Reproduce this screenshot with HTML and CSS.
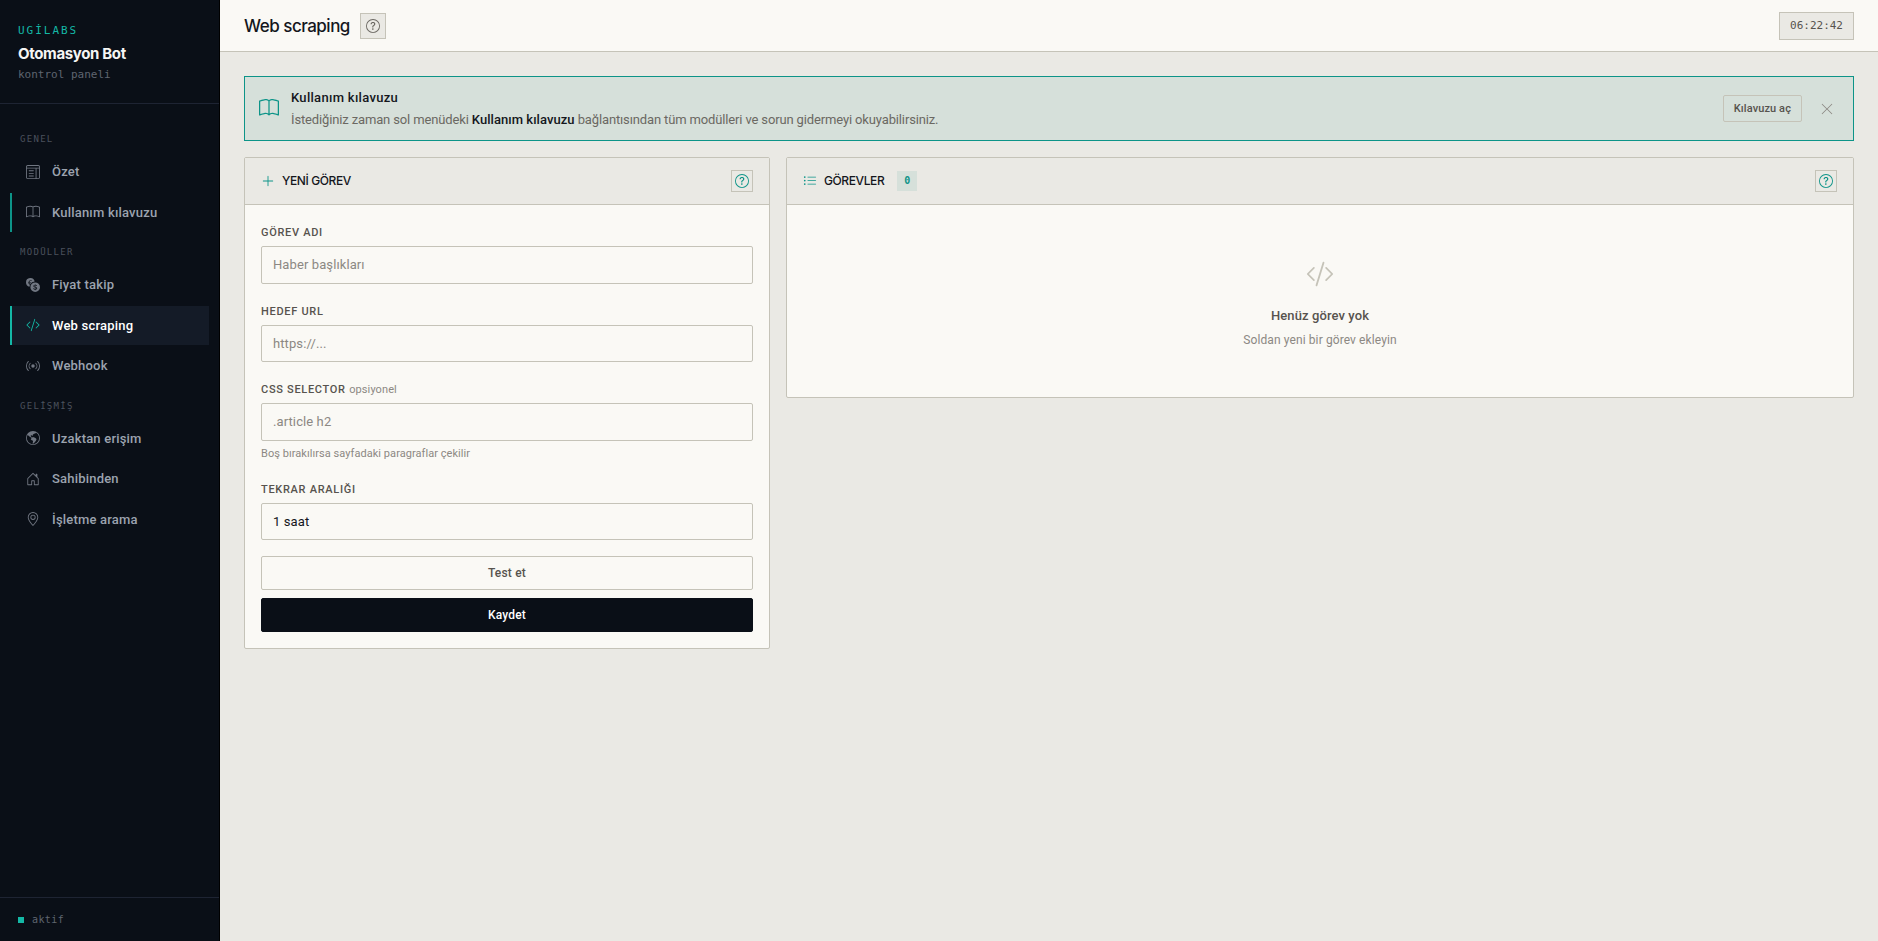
FILE: index.html
```html
<!DOCTYPE html>
<html lang="tr">
<head>
    <meta charset="UTF-8">
    <meta name="viewport" content="width=device-width, initial-scale=1.0">
    <title>Web scraping - Otomasyon Bot</title>
    <link rel="stylesheet" href="styles.css">
</head>
<body>
    <svg class="sprite" xmlns="http://www.w3.org/2000/svg">
        <symbol id="i-window" viewBox="0 0 16 16">
            <path d="M3 6.500a.5.5 0 0 1 .5-.5h5a.5.5 0 0 1 0 1h-5a.5.5 0 0 1-.5-.5m0 3a.5.5 0 0 1 .5-.5h5a.5.5 0 0 1 0 1h-5a.5.5 0 0 1-.5-.5m.5 2.500a.5.5 0 0 0 0 1h5a.5.5 0 0 0 0-1z"/>
            <path d="M2 0a2 2 0 0 0-2 2v12a2 2 0 0 0 2 2h12a2 2 0 0 0 2-2V2a2 2 0 0 0-2-2zm12 1a1 1 0 0 1 1 1v1H1V2a1 1 0 0 1 1-1zm1 3v10a1 1 0 0 1-1 1h-2V4zm-4 0v11H2a1 1 0 0 1-1-1V4z"/>
        </symbol>
        <symbol id="i-book" viewBox="0 0 16 16">
            <path d="M1 2.828c.885-.37 2.154-.769 3.388-.893 1.33-.134 2.458.063 3.112.752v9.746c-.935-.53-2.12-.603-3.213-.493-1.18.12-2.37.461-3.287.811zm7.5-.141c.654-.689 1.782-.886 3.112-.752 1.234.124 2.503.523 3.388.893v9.923c-.918-.35-2.107-.692-3.287-.81-1.094-.111-2.278-.039-3.213.492zM8 1.783C7.015.936 5.587.81 4.287.94c-1.514.153-3.042.672-3.994 1.105A.5.5 0 0 0 0 2.500v11a.5.5 0 0 0 .707.455c.882-.4 2.303-.881 3.68-1.020 1.409-.142 2.590.087 3.223.877a.5.5 0 0 0 .78 0c.633-.79 1.814-1.019 3.222-.877 1.378.139 2.800.62 3.681 1.020A.5.5 0 0 0 16 13.500v-11a.5.5 0 0 0-.293-.455c-.952-.433-2.480-.952-3.994-1.105C10.413.809 8.985.936 8 1.783"/>
        </symbol>
        <symbol id="i-exchange" viewBox="0 0 16 16">
            <path d="M0 5a5 5 0 0 0 4.027 4.905 6.5 6.5 0 0 1 .544-2.073C3.695 7.536 3.132 6.864 3 5.91h-.5v-.426h.466V5.050q-.001-.07.004-.135H2.500v-.427h.511C3.236 3.240 4.213 2.500 5.681 2.500c.316 0 .59.031.819.085v.733a3.500 3.500 0 0 0-.815-.082c-.919 0-1.538.466-1.734 1.252h1.917v.427h-1.980q-.004.07-.003.147v.422h1.983v.427H3.930c.118.602.468 1.030 1.005 1.229a6.500 6.500 0 0 1 4.970-3.113A5.002 5.002 0 0 0 0 5m16 5.500a5.500 5.500 0 1 1-11 0 5.500 5.500 0 0 1 11 0m-7.750 1.322c.069.835.746 1.485 1.964 1.562V14h.54v-.62c1.259-.086 1.996-.74 1.996-1.690 0-.865-.563-1.310-1.570-1.540l-.426-.1V8.374c.54.06.884.347.966.745h.948c-.07-.804-.779-1.433-1.914-1.502V7h-.54v.629c-1.076.103-1.808.732-1.808 1.622 0 .787.544 1.288 1.450 1.493l.358.085v1.780c-.554-.08-.92-.376-1.003-.787zm1.960-1.895c-.532-.12-.82-.364-.82-.732 0-.41.311-.719.824-.809v1.540h-.005zm.622 1.044c.645.145.943.38.943.796 0 .474-.37.8-1.020.86v-1.674z"/>
        </symbol>
        <symbol id="i-code" viewBox="0 0 16 16">
            <path d="M10.478 1.647a.5.5 0 1 0-.956-.294l-4 13a.5.5 0 0 0 .956.294zM4.854 4.146a.5.5 0 0 1 0 .708L1.707 8l3.147 3.146a.5.5 0 0 1-.708.708l-3.500-3.500a.5.5 0 0 1 0-.708l3.500-3.500a.5.5 0 0 1 .708 0m6.292 0a.5.5 0 0 0 0 .708L14.293 8l-3.147 3.146a.5.5 0 0 0 .708.708l3.500-3.500a.5.5 0 0 0 0-.708l-3.500-3.500a.5.5 0 0 0-.708 0"/>
        </symbol>
        <symbol id="i-broadcast" viewBox="0 0 16 16">
            <path d="M3.050 3.050a7 7 0 0 0 0 9.900.5.5 0 0 1-.707.707 8 8 0 0 1 0-11.314.5.5 0 0 1 .707.707m2.122 2.122a4 4 0 0 0 0 5.656.5.5 0 1 1-.708.708 5 5 0 0 1 0-7.072.5.5 0 0 1 .708.708m5.656-.708a.5.5 0 0 1 .708 0 5 5 0 0 1 0 7.072.5.5 0 1 1-.708-.708 4 4 0 0 0 0-5.656.5.5 0 0 1 0-.708m2.122-2.120a.5.5 0 0 1 .707 0 8 8 0 0 1 0 11.313.5.5 0 0 1-.707-.707 7 7 0 0 0 0-9.900.5.5 0 0 1 0-.707zM10 8a2 2 0 1 1-4 0 2 2 0 0 1 4 0"/>
        </symbol>
        <symbol id="i-globe" viewBox="0 0 16 16">
            <path d="M8 0a8 8 0 1 0 0 16A8 8 0 0 0 8 0M2.040 4.326c.325 1.329 2.532 2.540 3.717 3.190.48.263.793.434.743.484q-.121.12-.242.234c-.416.396-.787.749-.758 1.266.035.634.618.824 1.214 1.017.577.188 1.168.38 1.286.983.082.417-.075.988-.22 1.520-.215.782-.406 1.480.22 1.480 1.500-.5 3.798-3.186 4-5 .138-1.243-2-2-3.500-2.500-.478-.16-.755.081-.99.284-.172.15-.322.279-.51.216-.445-.148-2.500-2-1.500-2.500.78-.39.952-.171 1.227.182.078.099.163.208.273.318.609.304.662-.132.723-.633.039-.322.081-.671.277-.867.434-.434 1.265-.791 2.028-1.120.712-.306 1.365-.587 1.579-.88A7 7 0 1 1 2.040 4.327Z"/>
        </symbol>
        <symbol id="i-house" viewBox="0 0 16 16">
            <path d="M8.354 1.146a.5.5 0 0 0-.708 0l-6 6A.5.5 0 0 0 1.500 7.500v7a.5.5 0 0 0 .5.5h4.500a.5.5 0 0 0 .5-.5v-4h2v4a.5.5 0 0 0 .5.5H14a.5.5 0 0 0 .5-.5v-7a.5.5 0 0 0-.146-.354L13 5.793V2.500a.5.5 0 0 0-.5-.5h-1a.5.5 0 0 0-.5.5v1.293zM2.500 14V7.707l5.500-5.500 5.500 5.500V14H10v-4a.5.5 0 0 0-.5-.5h-3a.5.5 0 0 0-.5.5v4z"/>
        </symbol>
        <symbol id="i-geo" viewBox="0 0 16 16">
            <path d="M12.166 8.940c-.524 1.062-1.234 2.120-1.960 3.070A32 32 0 0 1 8 14.580a32 32 0 0 1-2.206-2.570c-.726-.95-1.436-2.008-1.960-3.070C3.304 7.867 3 6.862 3 6a5 5 0 0 1 10 0c0 .862-.305 1.867-.834 2.940M8 16s6-5.686 6-10A6 6 0 0 0 2 6c0 4.314 6 10 6 10"/>
            <path d="M8 8a2 2 0 1 1 0-4 2 2 0 0 1 0 4m0 1a3 3 0 1 0 0-6 3 3 0 0 0 0 6"/>
        </symbol>
        <symbol id="i-help" viewBox="0 0 16 16">
            <path d="M8 15A7 7 0 1 1 8 1a7 7 0 0 1 0 14m0 1A8 8 0 1 0 8 0a8 8 0 0 0 0 16"/>
            <path d="M5.255 5.786a.237.237 0 0 0 .241.247h.825c.138 0 .248-.113.266-.25.09-.656.54-1.134 1.342-1.134.686 0 1.314.343 1.314 1.168 0 .635-.374.927-.965 1.371-.673.489-1.206 1.060-1.168 1.987l.003.217a.25.25 0 0 0 .25.246h.811a.25.25 0 0 0 .25-.25v-.105c0-.718.273-.927 1.010-1.486.609-.463 1.244-.977 1.244-2.056 0-1.511-1.276-2.241-2.673-2.241-1.267 0-2.655.59-2.750 2.286m1.557 5.763c0 .533.425.927 1.010.927.609 0 1.028-.394 1.028-.927 0-.552-.42-.94-1.029-.94-.584 0-1.009.388-1.009.94"/>
        </symbol>
        <symbol id="i-plus" viewBox="0 0 16 16">
            <path d="M8 2a.5.5 0 0 1 .5.5v5h5a.5.5 0 0 1 0 1h-5v5a.5.5 0 0 1-1 0v-5h-5a.5.5 0 0 1 0-1h5v-5A.5.5 0 0 1 8 2"/>
        </symbol>
        <symbol id="i-list" viewBox="0 0 16 16">
            <path d="M5 11.500a.5.5 0 0 1 .5-.5h9a.5.5 0 0 1 0 1h-9a.5.5 0 0 1-.5-.5m0-4a.5.5 0 0 1 .5-.5h9a.5.5 0 0 1 0 1h-9a.5.5 0 0 1-.5-.5m0-4a.5.5 0 0 1 .5-.5h9a.5.5 0 0 1 0 1h-9a.5.5 0 0 1-.5-.5m-3 1a1 1 0 1 0 0-2 1 1 0 0 0 0 2m0 4a1 1 0 1 0 0-2 1 1 0 0 0 0 2m0 4a1 1 0 1 0 0-2 1 1 0 0 0 0 2"/>
        </symbol>
        <symbol id="i-close" viewBox="0 0 16 16">
            <path d="M2.146 2.854a.5.5 0 1 1 .708-.708L8 7.293l5.146-5.147a.5.5 0 0 1 .708.708L8.707 8l5.147 5.146a.5.5 0 0 1-.708.708L8 8.707l-5.146 5.147a.5.5 0 0 1-.708-.708L7.293 8z"/>
        </symbol>
    </svg>

    <div class="app">
        <aside class="sidebar">
            <div class="brand">
                <div class="brand-tag">UGİLABS</div>
                <div class="brand-name">Otomasyon Bot</div>
                <div class="brand-sub">kontrol paneli</div>
            </div>
            <nav class="nav">
                <div class="nav-label">GENEL</div>
                <a class="nav-item" href="#"><svg class="icon"><use href="#i-window"/></svg>Özet</a>
                <a class="nav-item guide" href="#"><svg class="icon"><use href="#i-book"/></svg>Kullanım kılavuzu</a>
                <div class="nav-label">MODÜLLER</div>
                <a class="nav-item" href="#"><svg class="icon"><use href="#i-exchange"/></svg>Fiyat takip</a>
                <a class="nav-item active" href="#"><svg class="icon"><use href="#i-code"/></svg>Web scraping</a>
                <a class="nav-item" href="#"><svg class="icon"><use href="#i-broadcast"/></svg>Webhook</a>
                <div class="nav-label">GELİŞMİŞ</div>
                <a class="nav-item" href="#"><svg class="icon"><use href="#i-globe"/></svg>Uzaktan erişim</a>
                <a class="nav-item" href="#"><svg class="icon"><use href="#i-house"/></svg>Sahibinden</a>
                <a class="nav-item" href="#"><svg class="icon"><use href="#i-geo"/></svg>İşletme arama</a>
            </nav>
            <div class="sidebar-foot"><span class="dot"></span>aktif</div>
        </aside>

        <div class="main">
            <header class="topbar">
                <h1>Web scraping</h1>
                <button class="help help-lg"><svg class="icon"><use href="#i-help"/></svg></button>
                <div class="clock">06:22:42</div>
            </header>

            <main class="content">
                <div class="banner">
                    <svg class="icon banner-icon"><use href="#i-book"/></svg>
                    <div class="banner-text">
                        <div class="banner-title">Kullanım kılavuzu</div>
                        <p>İstediğiniz zaman sol menüdeki <strong>Kullanım kılavuzu</strong> bağlantısından tüm modülleri ve sorun gidermeyi okuyabilirsiniz.</p>
                    </div>
                    <button class="btn-guide">Kılavuzu aç</button>
                    <button class="btn-close"><svg class="icon"><use href="#i-close"/></svg></button>
                </div>

                <div class="columns">
                    <section class="card">
                        <div class="card-head">
                            <svg class="icon"><use href="#i-plus"/></svg>
                            <h2>YENİ GÖREV</h2>
                            <button class="help"><svg class="icon"><use href="#i-help"/></svg></button>
                        </div>
                        <form class="card-body">
                            <div class="field">
                                <label for="name">GÖREV ADI</label>
                                <input id="name" type="text" placeholder="Haber başlıkları">
                            </div>
                            <div class="field">
                                <label for="url">HEDEF URL</label>
                                <input id="url" type="text" placeholder="https://...">
                            </div>
                            <div class="field">
                                <label for="selector">CSS SELECTOR <span class="optional">opsiyonel</span></label>
                                <input id="selector" type="text" placeholder=".article h2">
                                <div class="hint">Boş bırakılırsa sayfadaki paragraflar çekilir</div>
                            </div>
                            <div class="field">
                                <label for="interval">TEKRAR ARALIĞI</label>
                                <select id="interval">
                                    <option>1 saat</option>
                                </select>
                            </div>
                            <div class="actions">
                                <button type="button" class="btn">Test et</button>
                                <button type="button" class="btn btn-dark">Kaydet</button>
                            </div>
                        </form>
                    </section>

                    <section class="card">
                        <div class="card-head">
                            <svg class="icon"><use href="#i-list"/></svg>
                            <h2>GÖREVLER</h2>
                            <span class="count">0</span>
                            <button class="help"><svg class="icon"><use href="#i-help"/></svg></button>
                        </div>
                        <div class="empty">
                            <svg class="icon"><use href="#i-code"/></svg>
                            <div class="empty-title">Henüz görev yok</div>
                            <div class="empty-sub">Soldan yeni bir görev ekleyin</div>
                        </div>
                    </section>
                </div>
            </main>
        </div>
    </div>
</body>
</html>
```
FILE: styles.css
```css
:root {
    --ink: #0a0f17;
    --paper: #faf9f5;
    --bg: #eae9e4;
    --line: #c5c3b8;
    --teal: #0d9488;
    --teal-bright: #14b8a6;
    --tint: #d6e0da;
    --text: #14161c;
    --text-mid: #57534e;
    --text-soft: #8c8883;
    --sans: Roboto, "Noto Sans", sans-serif;
    --head: Inter, Roboto, sans-serif;
    --mono: "DejaVu Sans Mono", "Liberation Mono", monospace;
}
* {
    box-sizing: border-box;
}
body {
    margin: 0;
    background: var(--bg);
    color: var(--text);
    font-family: var(--sans);
    font-size: 13px;
    line-height: 1.5;
}
button, input, select {
    font-family: inherit;
}
.sprite {
    display: none;
}
.icon {
    display: block;
    width: 14px;
    height: 14px;
    flex-shrink: 0;
    fill: currentColor;
}
.app {
    display: flex;
    height: 100vh;
}

/* sidebar */
.sidebar {
    width: 220px;
    flex-shrink: 0;
    display: flex;
    flex-direction: column;
    background: var(--ink);
    border-right: 1px solid #000;
}
.brand {
    height: 104px;
    padding: 22px 18px 0;
    border-bottom: 1px solid #1e2433;
}
.brand-tag {
    font: 11px/17px var(--mono);
    letter-spacing: 1.98px;
    color: var(--teal-bright);
}
.brand-name {
    margin-top: 3px;
    font: 700 15px/24px var(--head);
    letter-spacing: -0.35px;
    color: #f5f5f4;
}
.brand-sub {
    font: 11px/17px var(--mono);
    color: #5f6570;
}
.nav {
    flex: 1;
    padding: 16px 10px;
}
.nav-label {
    height: 32px;
    padding: 12px 10px 0;
    font: 9px/14px var(--mono);
    letter-spacing: 1.3px;
    color: #4b515c;
}
.nav-item {
    display: flex;
    align-items: center;
    gap: 12px;
    height: 39.5px;
    margin-bottom: 1px;
    padding-left: 14px;
    border-left: 2px solid transparent;
    font-weight: 500;
    letter-spacing: 0.2px;
    color: #9ca3af;
    text-decoration: none;
}
.nav-item .icon {
    color: #717782;
}
.nav-item.guide {
    border-left-color: var(--teal);
}
.nav-item.active {
    border-left-color: var(--teal-bright);
    background: #141b27;
    color: #fff;
}
.nav-item.active .icon {
    color: var(--teal-bright);
}
.sidebar-foot {
    display: flex;
    align-items: center;
    gap: 8px;
    height: 44px;
    padding: 0 18px;
    border-top: 1px solid #1e2433;
    font: 10px/16px var(--mono);
    letter-spacing: 0.4px;
    color: #5f6570;
}
.dot {
    width: 6px;
    height: 6px;
    background: var(--teal-bright);
}

/* top bar */
.main {
    flex: 1;
    min-width: 0;
}
.topbar {
    display: flex;
    align-items: center;
    gap: 10px;
    height: 52px;
    padding: 0 24px;
    background: var(--paper);
    border-bottom: 1px solid var(--line);
}
.topbar h1 {
    margin: 0;
    font: 500 17px/24px var(--head);
    letter-spacing: -0.5px;
}
.help {
    display: flex;
    align-items: center;
    justify-content: center;
    width: 22px;
    height: 22px;
    padding: 0;
    border: 1px solid var(--line);
    background: var(--bg);
    color: var(--teal);
    cursor: pointer;
}
.help-lg {
    width: 26px;
    height: 26px;
    color: #6b6862;
}
.clock {
    margin-left: auto;
    padding: 4px 10px;
    border: 1px solid var(--line);
    background: var(--bg);
    font: 11px/18px var(--mono);
    color: var(--text-mid);
}
.content {
    padding: 24px;
}

/* guide banner */
.banner {
    display: flex;
    align-items: center;
    height: 65px;
    margin-bottom: 16px;
    padding: 0 13px 0 14px;
    border: 1px solid var(--teal);
    background: var(--tint);
}
.banner-icon {
    width: 20px;
    height: 20px;
    margin-bottom: 2px;
    color: var(--teal);
}
.banner-text {
    flex: 1;
    margin-left: 12px;
}
.banner-title {
    font-weight: 500;
    line-height: 20px;
    letter-spacing: 0.3px;
}
.banner p {
    margin: 2px 0 0;
    line-height: 20px;
    letter-spacing: -0.14px;
    color: #6b6862;
}
.banner strong {
    font-weight: 500;
    letter-spacing: 0.05px;
    color: var(--text);
}
.btn-guide {
    height: 27px;
    padding: 0 10px;
    border: 1px solid var(--line);
    border-radius: 2px;
    background: transparent;
    font-size: 11px;
    font-weight: 500;
    letter-spacing: 0.1px;
    color: var(--text-mid);
}
.btn-close {
    margin-left: 12px;
    padding: 6px;
    border: 0;
    background: transparent;
    color: #8c8883;
}

/* cards */
.columns {
    display: grid;
    grid-template-columns: 526px 1fr;
    gap: 16px;
    align-items: start;
}
.card {
    border: 1px solid var(--line);
    border-radius: 2px;
    background: var(--paper);
}
.card-head {
    display: flex;
    align-items: center;
    height: 47px;
    padding: 0 16px;
    border-bottom: 1px solid var(--line);
    background: var(--bg);
    color: var(--teal);
}
.card-head h2 {
    margin: 0 0 0 7px;
    font: 500 12px/18px var(--head);
    letter-spacing: -0.4px;
    color: var(--text);
}
.card-head .help {
    margin-left: auto;
}
.count {
    width: 20px;
    height: 20px;
    margin-left: 13px;
    background: var(--tint);
    font: bold 10px/20px var(--mono);
    text-align: center;
}
.card-body {
    padding: 16px;
}
.field {
    margin-bottom: 16px;
}
.field label {
    display: block;
    height: 25px;
    font-size: 11px;
    font-weight: 500;
    line-height: 24px;
    letter-spacing: 0.7px;
    color: var(--text-mid);
}
.optional {
    font-weight: 400;
    letter-spacing: 0.1px;
    color: var(--text-soft);
}
.field input, .field select {
    display: block;
    width: 100%;
    height: 37.5px;
    padding: 0 11px;
    border: 1px solid var(--line);
    border-radius: 2px;
    outline: none;
    background: var(--paper);
    font-size: 13px;
    letter-spacing: 0.1px;
    color: var(--text);
    appearance: none;
}
.field input::placeholder {
    color: var(--text-soft);
}
.hint {
    height: 21px;
    padding-top: 4px;
    font-size: 11px;
    line-height: 17px;
    letter-spacing: 0.05px;
    color: var(--text-soft);
}
.actions {
    display: flex;
    flex-direction: column;
    gap: 8px;
}
.btn {
    height: 34px;
    border: 1px solid var(--line);
    border-radius: 2px;
    background: var(--paper);
    font-size: 12px;
    font-weight: 500;
    letter-spacing: 0.2px;
    color: var(--text-mid);
}
.btn-dark {
    border-color: var(--ink);
    background: var(--ink);
    color: #fff;
}

/* empty state */
.empty {
    display: flex;
    flex-direction: column;
    align-items: center;
    height: 192px;
    padding-top: 55px;
    color: var(--line);
}
.empty .icon {
    width: 28px;
    height: 28px;
}
.empty-title {
    margin-top: 18px;
    font-weight: 500;
    line-height: 20px;
    letter-spacing: 0.1px;
    color: var(--text-mid);
}
.empty-sub {
    margin-top: 4px;
    font-size: 12px;
    line-height: 20px;
    letter-spacing: 0.1px;
    color: var(--text-soft);
}
```
